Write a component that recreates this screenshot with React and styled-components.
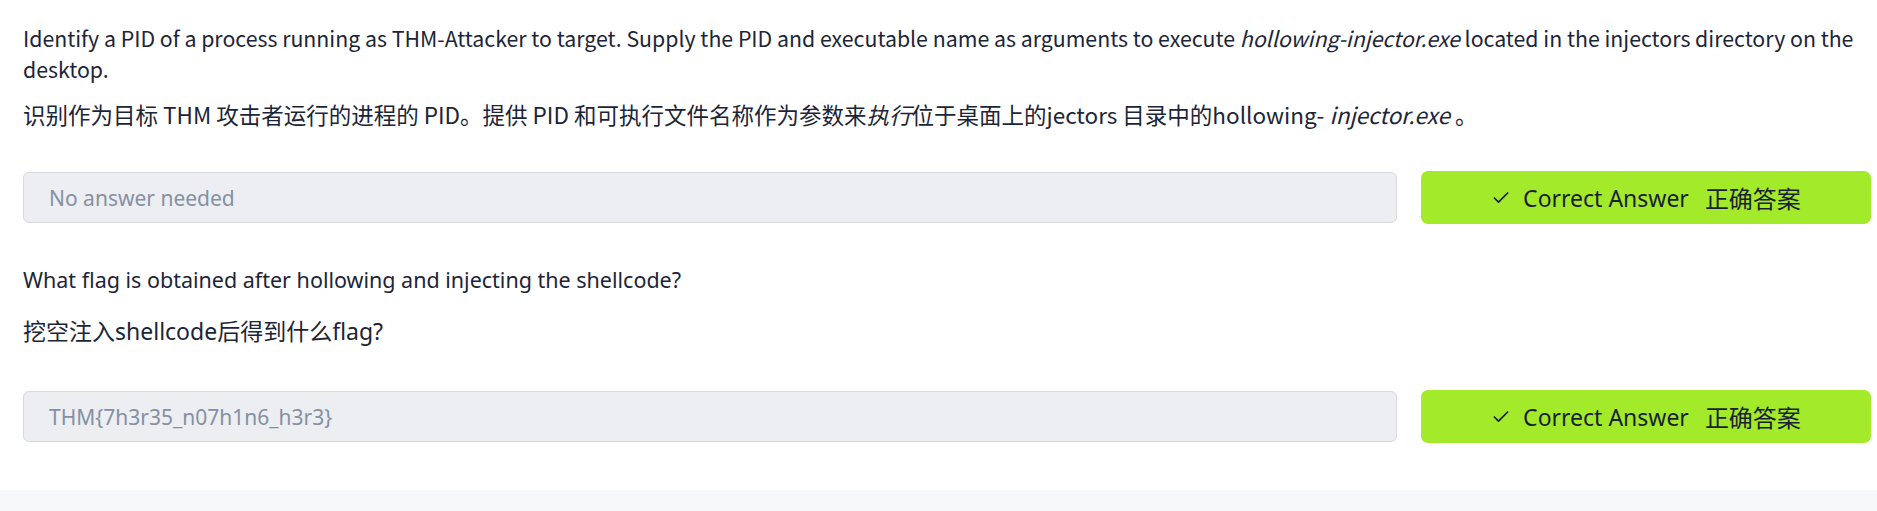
import React from "react";
import styled, { createGlobalStyle } from "styled-components";
import { Check } from "lucide-react";

const GlobalStyle = createGlobalStyle`
  html, body {
    margin: 0;
    padding: 0;
    background: #ffffff;
  }
  body {
    font-family: "Noto Sans CJK SC", "Noto Sans", sans-serif;
    color: #1c2538;
  }
`;

const Page = styled.div`
  width: 1877px;
  height: 511px;
  overflow: hidden;
  display: flex;
  flex-direction: column;
`;

const Tasks = styled.div`
  padding: 22px 6px 0 23px;
  display: flex;
  flex-direction: column;
`;

const Question = styled.div`
  display: flex;
  flex-direction: column;
  margin-top: ${(props) => props.gap || 0}px;
`;

const Prompt = styled.p`
  margin: 0;
  font-family: ${(props) =>
    props.alt
      ? `"Noto Sans", "Noto Sans CJK SC", sans-serif`
      : `"Noto Sans CJK SC", sans-serif`};
  font-size: ${(props) => (props.alt ? 21.5 : 21.3)}px;
  line-height: ${(props) => (props.alt ? 30 : 31)}px;
  color: #1c2538;

  em {
    font-style: italic;
  }
`;

const Translation = styled.p`
  margin: ${(props) => props.top}px 0 0;
  font-family: ${(props) =>
    props.alt
      ? `"Noto Sans", "Noto Sans CJK SC", sans-serif`
      : `"Noto Sans CJK SC", sans-serif`};
  font-size: ${(props) => (props.alt ? 23 : 22.5)}px;
  line-height: 36px;
  color: #1c2538;

  em {
    font-style: italic;
  }
`;

const AnswerRow = styled.div`
  display: flex;
  align-items: center;
  gap: 24px;
  margin-top: ${(props) => props.top}px;
`;

const AnswerField = styled.input`
  flex: 1;
  min-width: 0;
  height: 51px;
  box-sizing: border-box;
  padding: 0 25px;
  border: 1px solid #d6d9e0;
  border-radius: 6px;
  background: #eceef2;
  font-family: "Noto Sans", sans-serif;
  font-size: 21px;
  color: #8690a3;
  outline: none;
`;

const SubmitButton = styled.button`
  width: 450px;
  height: 53px;
  flex-shrink: 0;
  border: none;
  border-radius: 7px;
  background: #a3ea2a;
  color: #1a1f33;
  display: flex;
  align-items: center;
  justify-content: center;
  gap: 12px;
  font-family: "Noto Sans", sans-serif;
  font-size: 23px;
  padding: 0;
  cursor: pointer;
`;

const ButtonCn = styled.span`
  font-family: "Noto Sans CJK SC", sans-serif;
  font-size: 24px;
  margin-left: 4px;
`;

const Footer = styled.div`
  margin-top: 47px;
  flex: 1;
  background: #f7f8fa;
`;

const Answer = ({ value, top }) => (
  <AnswerRow top={top}>
    <AnswerField value={value} readOnly />
    <SubmitButton>
      <Check size={20} strokeWidth={2} />
      <span>Correct Answer</span>
      <ButtonCn>正确答案</ButtonCn>
    </SubmitButton>
  </AnswerRow>
);

export default function App() {
  return (
    <Page>
      <GlobalStyle />
      <Tasks>
        <Question>
          <Prompt>
            Identify a PID of a process running as THM-Attacker to target.
            Supply the PID and executable name as arguments to execute{" "}
            <em>hollowing-injector.exe</em> located in the injectors directory
            on the desktop.
          </Prompt>
          <Translation top={12}>
            识别作为目标 THM 攻击者运行的进程的 PID。提供 PID
            和可执行文件名称作为参数来<em>执行</em>位于桌面上的jectors
            目录中的hollowing- <em>injector.exe</em> 。
          </Translation>
          <Answer value="No answer needed" top={39} />
        </Question>
        <Question gap={41}>
          <Prompt alt>What flag is obtained after hollowing and injecting the shellcode?</Prompt>
          <Translation alt top={18}>
            挖空注入shellcode后得到什么flag?
          </Translation>
          <Answer value="THM{7h3r35_n07h1n6_h3r3}" top={41} />
        </Question>
      </Tasks>
      <Footer />
    </Page>
  );
}
